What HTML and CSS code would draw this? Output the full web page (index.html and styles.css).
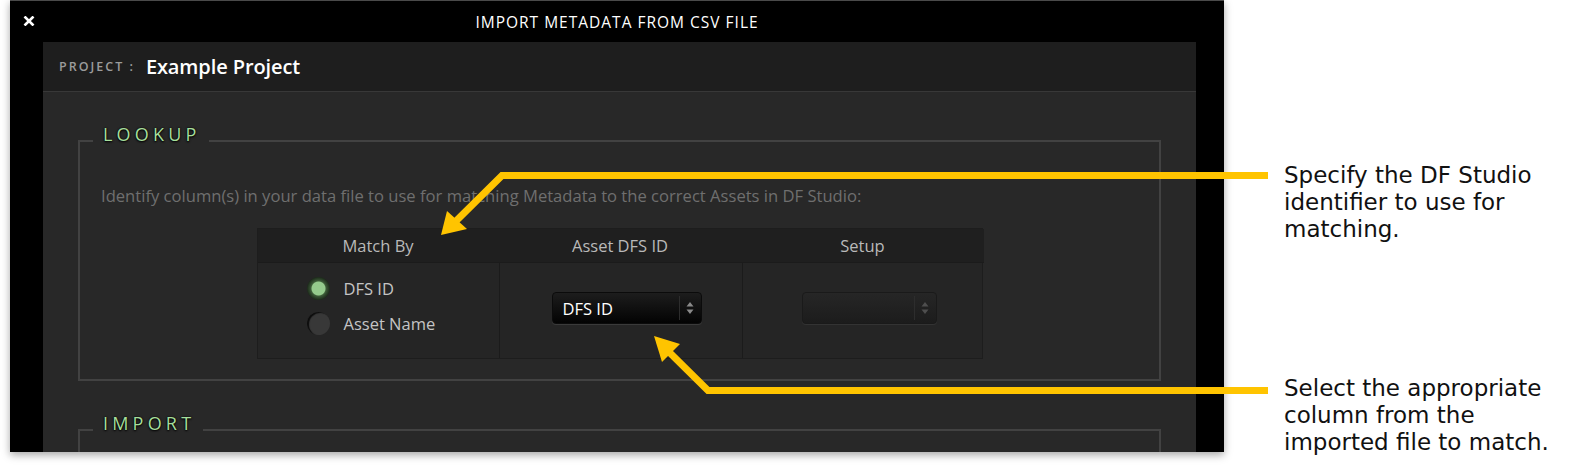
FILE: index.html
```html
<!DOCTYPE html>
<html>
<head>
<meta charset="utf-8">
<link rel="stylesheet" href="styles.css">
</head>
<body>
<div class="page">
  <div class="window">
    <div class="titlebar">
      <svg class="close" width="12" height="10" viewBox="0 0 12 10"><path d="M1.5 0.5 L10.5 9.5 M10.5 0.5 L1.5 9.5" stroke="#fff" stroke-width="2.6" fill="none"/></svg>
      <div class="title">IMPORT METADATA FROM CSV FILE</div>
    </div>
    <div class="panel">
      <div class="project">
        <span class="project-label">PROJECT :</span>
        <span class="project-name">Example Project</span>
      </div>
      <div class="panel-body">
        <fieldset class="group">
          <legend>LOOKUP</legend>
          <div class="group-inner">
            <p class="desc">Identify column(s) in your data file to use for matching Metadata to the correct Assets in DF Studio:</p>
            <div class="table">
              <div class="th">Match By</div>
              <div class="th">Asset DFS ID</div>
              <div class="th">Setup</div>
              <div class="td radios">
                <div class="radio-row"><span class="radio on"></span><span class="radio-label">DFS ID</span></div>
                <div class="radio-row"><span class="radio off"></span><span class="radio-label">Asset Name</span></div>
              </div>
              <div class="td sel-cell">
                <div class="select">
                  <span class="sel-text">DFS ID</span>
                  <span class="sel-arrows"><svg width="8" height="14" viewBox="0 0 8 14"><path d="M4 1 L7.5 5.5 L0.5 5.5 Z M0.5 8.5 L7.5 8.5 L4 13 Z" fill="#8a8a8a"/></svg></span>
                </div>
              </div>
              <div class="td setup-cell">
                <div class="select disabled">
                  <span class="sel-text"></span>
                  <span class="sel-arrows"><svg width="8" height="14" viewBox="0 0 8 14"><path d="M4 1 L7.5 5.5 L0.5 5.5 Z M0.5 8.5 L7.5 8.5 L4 13 Z" fill="#4e4e4e"/></svg></span>
                </div>
              </div>
            </div>
          </div>
        </fieldset>
        <fieldset class="group import">
          <legend>IMPORT</legend>
          <div class="group-inner"></div>
        </fieldset>
      </div>
    </div>
  </div>
  <div class="notes">
    <p class="note">Specify the DF Studio<br>identifier to use for<br>matching.</p>
    <p class="note second">Select the appropriate<br>column from the<br>imported file to match.</p>
  </div>
  <svg class="arrows" width="1580" height="470" viewBox="0 0 1580 470">
    <g fill="none" stroke="#ffc400" stroke-width="7" stroke-linejoin="miter">
      <path d="M1268 175.5 L502 175.5 L455 222"/>
      <path d="M1268 390.5 L708 390.5 L668 351"/>
    </g>
    <g fill="#ffc400">
      <polygon points="441,235 447,211 467,229"/>
      <polygon points="654,336 680,344 662,362"/>
    </g>
  </svg>
</div>
</body>
</html>
```
FILE: styles.css
```css
* { box-sizing: border-box; }
html, body { margin: 0; padding: 0; background: #fff; }
body { width: 1580px; height: 470px; overflow: hidden; font-family: "Open Sans", "DejaVu Sans", sans-serif; }
.page { position: relative; display: flex; width: 1580px; height: 470px; }

.window {
  margin-left: 10px;
  width: 1214px;
  height: 452px;
  background: #000;
  border-top: 1px solid #4a4a4a;
  display: flex;
  flex-direction: column;
  overflow: hidden;
  box-shadow: 0 3px 8px rgba(0,0,0,0.35);
}
.titlebar {
  height: 41px;
  flex: none;
  display: flex;
  align-items: center;
  justify-content: center;
  position: relative;
}
.close { position: absolute; left: 13px; top: 15px; }
.title { color: #fff; font-size: 15.5px; letter-spacing: 1px; padding-top: 1px; }

.panel {
  margin-left: 33px;
  width: 1153px;
  flex: 1;
  background: #282828;
  display: flex;
  flex-direction: column;
}
.project {
  height: 50px;
  flex: none;
  background: #1e1e1e;
  border-bottom: 1px solid #383838;
  display: flex;
  align-items: center;
  padding-left: 16px;
  padding-bottom: 1px;
}
.project-label { color: #9b9b9b; font-size: 12.5px; font-weight: 600; letter-spacing: 2px; margin-right: 11px; }
.project-name { color: #fff; font-size: 20px; font-weight: 600; letter-spacing: -0.1px; }

.panel-body { padding: 32px 35px 0 35px; }

.group {
  margin: 0;
  padding: 0;
  border: 2px solid #424242;
  min-width: 0;
}
.group legend {
  margin-left: 13px;
  padding: 0 8px 0 10px;
  font-size: 18px;
  line-height: 20px;
  padding-bottom: 14px;
  letter-spacing: 4.2px;
  color: #a6df9c;
  text-shadow: 0 1px 2px #000, 0 0 2px #000;
}
.group-inner { padding: 28px 20px 20px 20px; }
.group.import { margin-top: 32px; height: 120px; }

.desc {
  margin: 0;
  font-size: 16.6px;
  line-height: 20px;
  color: #6f6f6f;
  padding-left: 1px;
}

.table {
  margin: 22px auto 0;
  width: 726px;
  display: grid;
  grid-template-columns: 241px 243px 242px;
  grid-template-rows: 33px 96px;
  border: 1px solid #1d1d1d;
  background: #252525;
}
.th {
  background: #1f1f1f;
  color: #b9b9b9;
  font-size: 16.5px;
  display: flex;
  align-items: center;
  justify-content: center;
  padding-bottom: 1px;
}
.td { border-top: 1px solid #1b1b1b; }
.td + .td { border-left: 1px solid #1b1b1b; }

.radios { padding: 14px 0 0 49px; display: flex; flex-direction: column; gap: 12px; }
.radio-row { display: flex; align-items: center; height: 23px; }
.radio {
  width: 23px;
  height: 23px;
  border-radius: 50%;
  flex: none;
  margin-right: 14px;
}
.radio.on {
  background: radial-gradient(circle, #94cb8c 0 6.5px, #3d5e38 7.5px, #2c4229 9.5px, #1c2a1a 11.5px);
}
.radio.off {
  background: #383838;
  box-shadow: inset 2px 1px 1px #0d0d0d;
}
.radio-label { color: #c4c4c4; font-size: 16.5px; }

.sel-cell { padding: 29px 0 0 52px; }
.setup-cell { padding: 29px 0 0 59px; }
.select {
  width: 150px;
  height: 32px;
  border-radius: 4px;
  background: linear-gradient(#1d1d1d, #030303);
  border: 1px solid #0b0b0b;
  box-shadow: 0 1px 0 #3a3a3a;
  display: flex;
  align-items: center;
}
.select.disabled {
  width: 135px;
  background: linear-gradient(#262626, #1c1c1c);
  border-color: #1a1a1a;
  box-shadow: 0 1px 0 #333;
}
.sel-text { color: #fff; font-size: 16.5px; padding-left: 10px; flex: 1; }
.sel-arrows {
  width: 22px;
  height: 24px;
  border-left: 1px solid #2d2d2d;
  display: flex;
  align-items: center;
  justify-content: center;
}

.notes {
  margin-left: 60px;
  padding-top: 162px;
}
.note {
  margin: 0;
  font-family: "DejaVu Sans", Verdana, sans-serif;
  font-size: 23px;
  line-height: 26.8px;
  color: #111;
  white-space: nowrap;
}
.note.second { margin-top: 133px; }

.arrows { position: absolute; left: 0; top: 0; pointer-events: none; }
```
